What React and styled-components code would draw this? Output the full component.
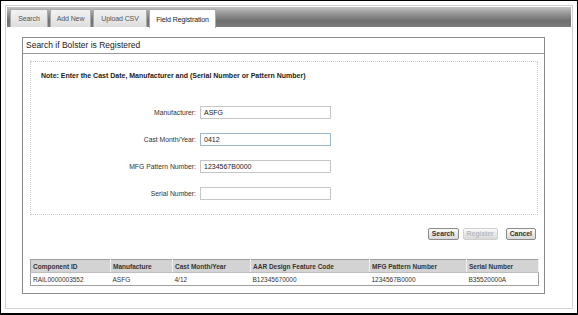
import React from 'react';
import styled, { createGlobalStyle } from 'styled-components';

const GlobalStyle = createGlobalStyle`
    html, body {
        margin: 0;
        padding: 0;
        background: #000;
    }
    body {
        font-family: "Liberation Sans", Arial, sans-serif;
    }
`;

const Frame = styled.div`
    width: 578px;
    height: 315px;
    box-sizing: border-box;
    padding: 1px 1px 2px 1px;
    background: #000;
`;

const Screen = styled.div`
    height: 100%;
    background: #fff;
    padding: 4px;
    box-sizing: border-box;
`;

const Container = styled.div`
    height: 100%;
    box-sizing: border-box;
    border: 1px solid #d2d2d2;
    padding: 1px;
    display: flex;
    flex-direction: column;
`;

const TabBar = styled.div`
    height: 20px;
    display: flex;
    align-items: flex-end;
    gap: 2px;
    padding-left: 3px;
    background: linear-gradient(#c4c4c4 0%, #9a9a9a 30%, #6e6e6e 70%, #7c7c7c 100%);
`;

const Tab = styled.div`
    box-sizing: border-box;
    width: ${p => p.w}px;
    display: flex;
    align-items: center;
    justify-content: center;
    font-size: 7px;
    letter-spacing: -0.1px;
    color: ${p => (p.active ? '#222' : '#555')};
    background: ${p => (p.active ? '#fff' : 'linear-gradient(#f2f2f2, #dedede)')};
    border: 1px solid #aaa;
    border-bottom: none;
    margin-bottom: ${p => (p.active ? '-1px' : '0')};
    height: ${p => (p.active ? '19px' : '18px')};
`;

const Content = styled.div`
    flex: 1;
    padding: 10px 26px 0 15px;
`;

const Panel = styled.div`
    border: 1px solid #8a8a8a;
    height: 257px;
    box-sizing: border-box;
`;

const PanelTitle = styled.div`
    height: 15px;
    line-height: 15px;
    padding-left: 3px;
    font-size: 8.5px;
    color: #222;
    border-bottom: 1px solid #9a9a9a;
`;

const PanelBody = styled.div`
    padding: 7px 6px 0 7px;
`;

const Fieldset = styled.div`
    border: 1px dotted #c8c8c8;
    height: 154px;
    box-sizing: border-box;
    padding: 10px 0 0 10px;
`;

const Note = styled.div`
    font-size: 7px;
    font-weight: bold;
    color: #222;
    margin-bottom: 27px;
`;

const Rows = styled.div`
    display: flex;
    flex-direction: column;
    gap: 14px;
`;

const Row = styled.div`
    display: flex;
    align-items: center;
    height: 13px;
`;

const Label = styled.div`
    width: 155px;
    text-align: right;
    font-size: 6.8px;
    color: #333;
    padding-right: 4px;
`;

const Input = styled.div`
    width: 131px;
    height: 13px;
    box-sizing: border-box;
    border: 1px solid ${p => (p.focus ? '#9ab8d0' : '#c6c6c6')};
    font-size: 7px;
    color: #222;
    line-height: 11px;
    padding-left: 3px;
`;

const Actions = styled.div`
    display: flex;
    justify-content: flex-end;
    gap: 4px;
    padding-top: 13px;
    margin-right: 2px;
`;

const Button = styled.div`
    height: 12px;
    box-sizing: border-box;
    padding: 0 3px;
    font-size: 6.8px;
    font-weight: bold;
    line-height: 10px;
    color: ${p => (p.disabled ? '#b8b8b8' : '#333')};
    border: 1px solid ${p => (p.disabled ? '#cfcfcf' : '#8c8c8c')};
    border-radius: 2px;
    background: linear-gradient(#fafafa, #d8d8d8);
    margin-left: ${p => p.gap || 0}px;
`;

const Table = styled.table`
    margin-top: 19px;
    width: 508px;
    border-collapse: collapse;
    border: 1px solid #a0a0a0;
    font-size: 6.5px;
    color: #333;
    table-layout: fixed;
`;

const Th = styled.th`
    text-align: left;
    font-weight: bold;
    background: #d3d3d3;
    height: 12px;
    padding: 0 2px;
    border-right: 1px solid #f0f0f0;
    border-bottom: 1px solid #bdbdbd;
`;

const Td = styled.td`
    height: 12px;
    padding: 0 2px;
    background: #fff;
`;

const columns = [
    { title: 'Component ID', width: 80 },
    { title: 'Manufacture', width: 62 },
    { title: 'Cast Month/Year', width: 78 },
    { title: 'AAR Design Feature Code', width: 119 },
    { title: 'MFG Pattern Number', width: 97 },
    { title: 'Serial Number', width: 72 },
];

const row = ['RAIL0000003552', 'ASFG', '4/12', 'B12345670000', '1234567B0000', 'B35520000A'];

const fields = [
    { label: 'Manufacturer:', value: 'ASFG' },
    { label: 'Cast Month/Year:', value: '0412', focus: true },
    { label: 'MFG Pattern Number:', value: '1234567B0000' },
    { label: 'Serial Number:', value: '' },
];

const tabs = [
    { title: 'Search', w: 38 },
    { title: 'Add New', w: 41 },
    { title: 'Upload CSV', w: 54 },
    { title: 'Field Registration', w: 67, active: true },
];

const App = () => {
    return (
        <Frame>
            <GlobalStyle />
            <Screen>
                <Container>
                    <TabBar>
                        {tabs.map(t => (
                            <Tab key={t.title} w={t.w} active={t.active}>{t.title}</Tab>
                        ))}
                    </TabBar>
                    <Content>
                        <Panel>
                            <PanelTitle>Search if Bolster is Registered</PanelTitle>
                            <PanelBody>
                                <Fieldset>
                                    <Note>Note: Enter the Cast Date, Manufacturer and (Serial Number or Pattern Number)</Note>
                                    <Rows>
                                        {fields.map(f => (
                                            <Row key={f.label}>
                                                <Label>{f.label}</Label>
                                                <Input focus={f.focus}>{f.value}</Input>
                                            </Row>
                                        ))}
                                    </Rows>
                                </Fieldset>
                                <Actions>
                                    <Button>Search</Button>
                                    <Button disabled>Register</Button>
                                    <Button gap={4}>Cancel</Button>
                                </Actions>
                                <Table>
                                    <colgroup>
                                        {columns.map(c => (
                                            <col key={c.title} style={{ width: c.width }} />
                                        ))}
                                    </colgroup>
                                    <thead>
                                        <tr>
                                            {columns.map(c => (
                                                <Th key={c.title}>{c.title}</Th>
                                            ))}
                                        </tr>
                                    </thead>
                                    <tbody>
                                        <tr>
                                            {row.map((v, i) => (
                                                <Td key={i}>{v}</Td>
                                            ))}
                                        </tr>
                                    </tbody>
                                </Table>
                            </PanelBody>
                        </Panel>
                    </Content>
                </Container>
            </Screen>
        </Frame>
    );
};

export default App;
